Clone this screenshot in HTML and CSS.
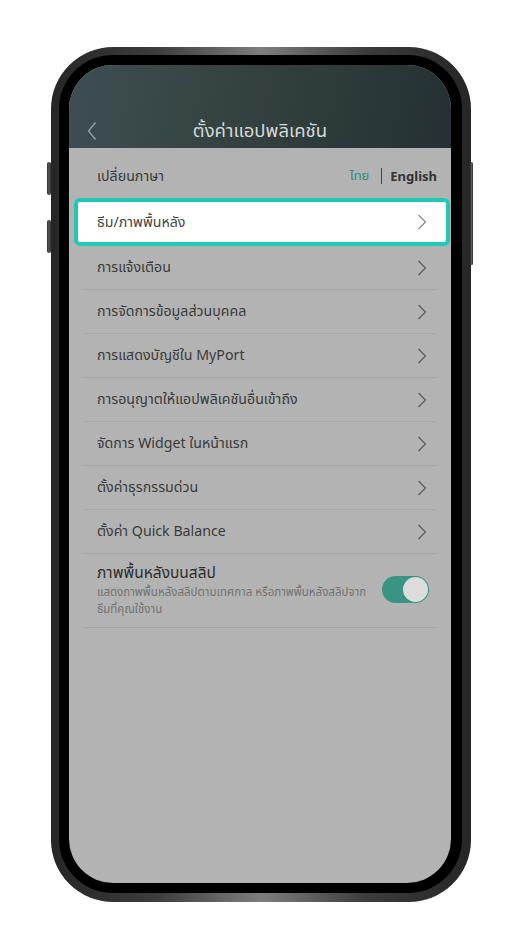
FILE: index.html
```html
<!DOCTYPE html>
<html lang="th">
<head>
  <meta charset="UTF-8">
  <meta name="viewport" content="width=device-width, initial-scale=1">
  <title>ตั้งค่าแอปพลิเคชัน</title>
  <link rel="stylesheet" href="styles.css">
</head>
<body>
  <!-- Phone frame -->
  <div class="phone">
    <span class="side-btn left one"></span>
    <span class="side-btn left two"></span>
    <span class="side-btn right"></span>

    <div class="bezel">
      <div class="screen">
        <!-- Header -->
        <div class="header">
          <svg class="back" width="10" height="20" viewBox="0 0 10 20">
            <path d="M8.5 1.5 L1.5 10 L8.5 18.5" fill="none" stroke="#8fa0a2" stroke-width="1.4"/>
          </svg>
          <h1>ตั้งค่าแอปพลิเคชัน</h1>
        </div>

        <!-- Settings list -->
        <div class="list">
          <div class="lang-row">
            <span class="label">เปลี่ยนภาษา</span>
            <div class="lang-switch">
              <span class="lang active">ไทย</span>
              <span class="divider"></span>
              <span class="lang en">English</span>
            </div>
          </div>

          <div class="row highlight">
            <span class="label">ธีม/ภาพพื้นหลัง</span>
            <svg class="chev" width="10" height="16" viewBox="0 0 10 16"><path d="M1.5 1 L8.5 8 L1.5 15" fill="none" stroke="#8a8a8a" stroke-width="1.3"/></svg>
          </div>

          <div class="row">
            <span class="label">การแจ้งเตือน</span>
            <svg class="chev" width="10" height="16" viewBox="0 0 10 16"><path d="M1.5 1 L8.5 8 L1.5 15" fill="none" stroke="#5e5e5e" stroke-width="1.3"/></svg>
          </div>
          <div class="row">
            <span class="label">การจัดการข้อมูลส่วนบุคคล</span>
            <svg class="chev" width="10" height="16" viewBox="0 0 10 16"><path d="M1.5 1 L8.5 8 L1.5 15" fill="none" stroke="#5e5e5e" stroke-width="1.3"/></svg>
          </div>
          <div class="row">
            <span class="label">การแสดงบัญชีใน MyPort</span>
            <svg class="chev" width="10" height="16" viewBox="0 0 10 16"><path d="M1.5 1 L8.5 8 L1.5 15" fill="none" stroke="#5e5e5e" stroke-width="1.3"/></svg>
          </div>
          <div class="row">
            <span class="label">การอนุญาตให้แอปพลิเคชันอื่นเข้าถึง</span>
            <svg class="chev" width="10" height="16" viewBox="0 0 10 16"><path d="M1.5 1 L8.5 8 L1.5 15" fill="none" stroke="#5e5e5e" stroke-width="1.3"/></svg>
          </div>
          <div class="row">
            <span class="label">จัดการ Widget ในหน้าแรก</span>
            <svg class="chev" width="10" height="16" viewBox="0 0 10 16"><path d="M1.5 1 L8.5 8 L1.5 15" fill="none" stroke="#5e5e5e" stroke-width="1.3"/></svg>
          </div>
          <div class="row">
            <span class="label">ตั้งค่าธุรกรรมด่วน</span>
            <svg class="chev" width="10" height="16" viewBox="0 0 10 16"><path d="M1.5 1 L8.5 8 L1.5 15" fill="none" stroke="#5e5e5e" stroke-width="1.3"/></svg>
          </div>
          <div class="row">
            <span class="label">ตั้งค่า Quick Balance</span>
            <svg class="chev" width="10" height="16" viewBox="0 0 10 16"><path d="M1.5 1 L8.5 8 L1.5 15" fill="none" stroke="#5e5e5e" stroke-width="1.3"/></svg>
          </div>

          <div class="row toggle-row">
            <div class="texts">
              <span class="title">ภาพพื้นหลังบนสลิป</span>
              <span class="sub">แสดงภาพพื้นหลังสลิปตามเทศกาล หรือภาพพื้นหลังสลิปจาก<br>ธีมที่คุณใช้งาน</span>
            </div>
            <div class="toggle"><span class="knob"></span></div>
          </div>
        </div>
      </div>
    </div>
  </div>
</body>
</html>
```

FILE: styles.css
```css
/* Reset */
* {
  margin: 0;
  padding: 0;
  box-sizing: border-box;
}
body {
  background: #ffffff;
  font-family: 'Noto Sans', 'Noto Sans Thai', 'Loma', sans-serif;
  padding: 47px 0 0 51px;
}

/* Phone frame */
.phone {
  position: relative;
  width: 420px;
  height: 855px;
  padding: 8px 9px 9px 8px;
  border-radius: 62px;
  background: linear-gradient(90deg, #262626 0%, #3c3c3c 25%, #7e7e7e 50%, #3c3c3c 75%, #262626 100%);
}
.bezel {
  height: 100%;
  padding: 10px 11px 10px 10px;
  border-radius: 54px;
  background: #000;
}
.side-btn {
  position: absolute;
  width: 4px;
  background: linear-gradient(90deg, #2a2a2a, #5a5a5a, #2a2a2a);
  border-radius: 2px;
}
.side-btn.left { left: -4px; }
.side-btn.one { top: 115px; height: 33px; }
.side-btn.two { top: 173px; height: 33px; }
.side-btn.right { right: -2px; top: 115px; height: 103px; width: 3px; }

.screen {
  height: 100%;
  border-radius: 44px;
  overflow: hidden;
  background: #b3b3b3;
  display: flex;
  flex-direction: column;
}

/* Header */
.header {
  height: 83px;
  display: flex;
  align-items: flex-end;
  justify-content: center;
  position: relative;
  padding-bottom: 4px;
  background: linear-gradient(100deg, #3e4e51 0%, #33403f 50%, #243033 100%);
}
.header h1 {
  font-size: 18.5px;
  font-weight: 400;
  color: #d4d8d8;
  line-height: 28px;
}
.header .back {
  position: absolute;
  left: 18px;
  bottom: 7px;
}

/* List */
.list {
  display: flex;
  flex-direction: column;
}
.label {
  font-size: 14.2px;
  color: #3a3a3a;
}
.lang-row {
  height: 50px;
  display: flex;
  align-items: center;
  justify-content: space-between;
  padding: 6px 14px 0 28px;
}
.lang-switch {
  display: flex;
  align-items: center;
  font-size: 13px;
}
.lang.active { color: #2c8a7d; }
.lang.en {
  color: #333;
  font-weight: 700;
}
.divider {
  width: 1px;
  height: 16px;
  background: #444;
  margin: 0 8px 0 12px;
}

.row {
  height: 44px;
  margin: 0 14px;
  padding: 0 14px;
  display: flex;
  align-items: center;
  justify-content: space-between;
  border-bottom: 1px solid #a6a6a6;
}
.row .chev { margin-right: -4px; }

.row.highlight {
  height: 48px;
  margin: 0 1px 0 5px;
  padding: 0 19px 0 19px;
  background: #fff;
  border: 4px solid #20c9b6;
  border-radius: 6px;
}
.row.highlight .chev { margin-right: 0; }
.row.highlight .label { color: #444; }

.toggle-row {
  height: 74px;
  align-items: flex-start;
  padding-top: 7px;
}
.texts {
  display: flex;
  flex-direction: column;
}
.title {
  font-size: 15.5px;
  color: #2e2e2e;
  font-weight: 400;
  line-height: 22px;
}
.sub {
  font-size: 11.5px;
  color: #727272;
  line-height: 17px;
}
.toggle {
  width: 47px;
  height: 27px;
  margin-top: 15px;
  margin-right: -6px;
  border-radius: 14px;
  background: #3a9483;
  display: flex;
  justify-content: flex-end;
  padding: 1px;
}
.knob {
  width: 25px;
  height: 25px;
  border-radius: 50%;
  background: #dcdcdc;
}
```
